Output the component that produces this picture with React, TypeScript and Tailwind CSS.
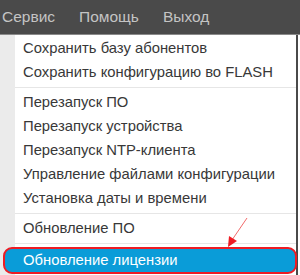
const items: (string | null)[] = [
  "Сохранить базу абонентов",
  "Сохранить конфигурацию во FLASH",
  null,
  "Перезапуск ПО",
  "Перезапуск устройства",
  "Перезапуск NTP-клиента",
  "Управление файлами конфигурации",
  "Установка даты и времени",
  null,
  "Обновление ПО",
  null,
];

export default function App() {
  return (
    <div
      className="relative w-[300px] h-[275px] overflow-hidden bg-white"
      style={{ fontFamily: '"Liberation Sans", Arial, sans-serif' }}
    >
      <div className="h-[34px] bg-[#4a4a4a] flex items-center text-[15.5px] text-[#c4c4c4]">
        <span className="ml-[2px]">Сервис</span>
        <span className="ml-[24px]">Помощь</span>
        <span className="ml-[24px]">Выход</span>
      </div>
      <div className="h-px bg-[#8a8a8a]" />
      <div className="flex h-[240px]">
        <div className="w-[15px] bg-[#ebebeb]" />
        <div className="w-[281px] pt-[1px]">
          {items.map((t, i) =>
            t === null ? (
              <div key={i} className="h-[6px] flex items-center">
                <div className="h-px w-full bg-[#e6e6e6]" />
              </div>
            ) : (
              <div key={i} className="h-[24px] flex items-center pl-[8px] text-[14.8px] text-[#383838]">
                {t}
              </div>
            )
          )}
        </div>
        <div className="w-[2px] bg-[#4a4a4a]" />
        <div className="flex-1 bg-white" />
      </div>
      <div className="absolute left-[3px] top-[247px] w-[294px] h-[27px] rounded-[9px] border-[2px] border-[#ee1c24] bg-[#0a9cd8] flex items-center pl-[18px] text-[14.8px] text-white">
        Обновление лицензии
      </div>
      <svg className="absolute left-0 top-0" width="300" height="275">
        <line x1="247" y1="218" x2="232" y2="240" stroke="#f26a6a" strokeWidth="1" />
        <polygon points="228,247 229,236 237,241" fill="#ee1c24" />
      </svg>
    </div>
  );
}
